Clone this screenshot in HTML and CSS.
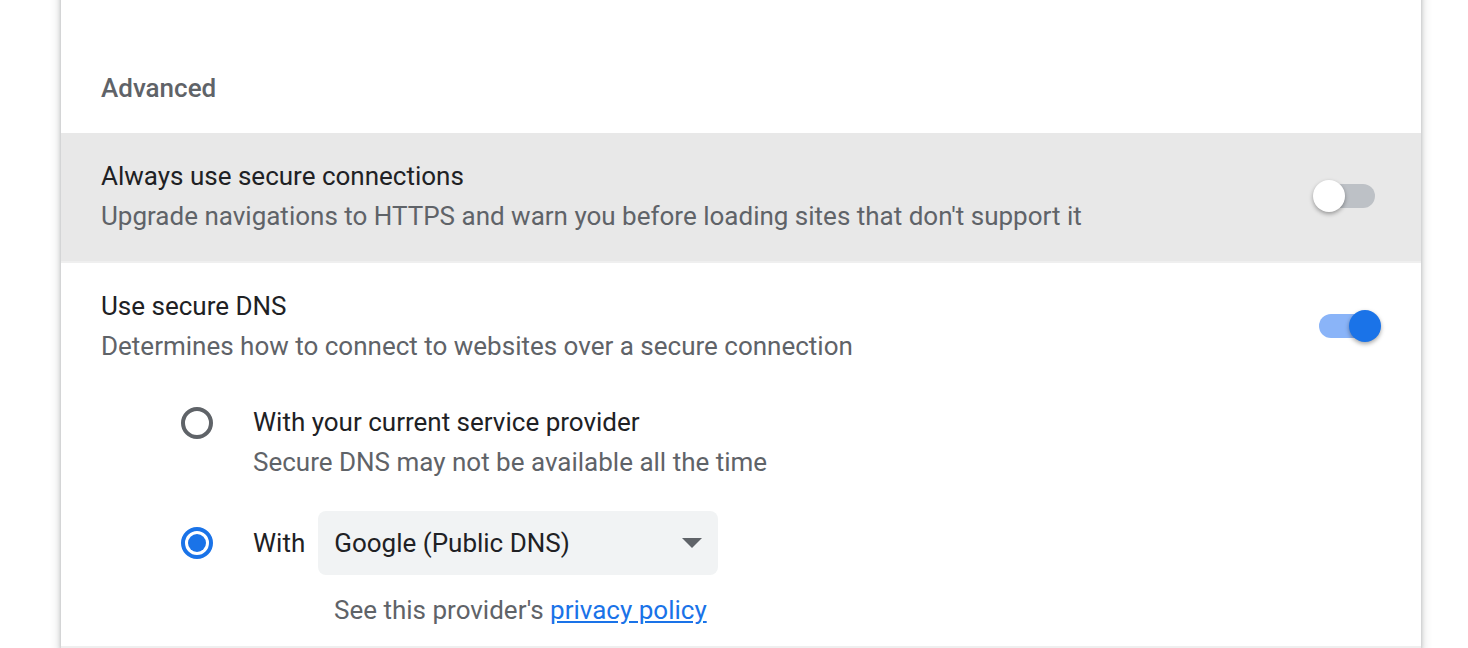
FILE: index.html
```html
<!DOCTYPE html>
<html>
<head>
<meta charset="utf-8">
<link rel="stylesheet" href="styles.css">
</head>
<body>
<div class="card">
  <div class="section-title">Advanced</div>
  <div class="row row-hover">
    <div class="row-text">
      <div class="primary">Always use secure connections</div>
      <div class="secondary">Upgrade navigations to HTTPS and warn you before loading sites that don't support it</div>
    </div>
    <div class="toggle">
      <span class="track"></span>
      <span class="knob"></span>
    </div>
  </div>
  <div class="row row-border">
    <div class="row-text">
      <div class="primary">Use secure DNS</div>
      <div class="secondary">Determines how to connect to websites over a secure connection</div>
    </div>
    <div class="toggle on">
      <span class="track"></span>
      <span class="knob"></span>
    </div>
  </div>
  <div class="radio-group">
    <div class="radio-row">
      <span class="radio"></span>
      <div class="radio-label">
        <div class="primary">With your current service provider</div>
        <div class="secondary">Secure DNS may not be available all the time</div>
      </div>
    </div>
    <div class="radio-row radio-row-select">
      <span class="radio checked"></span>
      <span class="primary with">With</span>
      <div class="select">
        <span>Google (Public DNS)</span>
        <span class="arrow"></span>
      </div>
    </div>
    <div class="policy secondary">See this provider's <a href="#">privacy policy</a></div>
  </div>
  <div class="row-border next"></div>
</div>
</body>
</html>
```

FILE: styles.css
```css
html, body {
  margin: 0;
  padding: 0;
  background: #ffffff;
  overflow: hidden;
}
body {
  font-family: Roboto, "Noto Sans", sans-serif;
  height: 648px;
}
.card {
  margin: -20px 0 0 61px;
  width: 1360px;
  background: #fff;
  box-shadow: 0 2px 4px rgba(60, 64, 67, 0.3), 0 2px 8px 3px rgba(60, 64, 67, 0.15);
  padding-top: 20px;
}
.section-title {
  padding: 72px 40px 29px;
  color: #5f6368;
  font-size: 26px;
  font-weight: 500;
  line-height: 32px;
}
.row {
  display: flex;
  align-items: center;
  padding: 23px 40px 25px;
  min-height: 80px;
}
.row-hover {
  background: #e8e8e8;
}
.row-border {
  border-top: 2px solid #efefef;
}
.row-text {
  flex: 1;
}
.primary {
  color: #202124;
  font-size: 26px;
  line-height: 40px;
}
.secondary {
  color: #5f6368;
  font-size: 26px;
  line-height: 40px;
}
.toggle {
  position: relative;
  width: 68px;
  height: 32px;
}
.track {
  position: absolute;
  left: 6px;
  top: 4px;
  width: 56px;
  height: 24px;
  border-radius: 12px;
  background: #bdc1c6;
}
.knob {
  position: absolute;
  left: 0;
  top: 0;
  width: 32px;
  height: 32px;
  border-radius: 50%;
  background: #fff;
  box-shadow: 0 2px 4px rgba(0, 0, 0, 0.35);
}
.toggle.on .track {
  background: #8ab4f8;
}
.toggle.on .knob {
  left: 36px;
  background: #1a73e8;
}
.radio-group {
  padding: 11px 40px 16px 120px;
}
.radio-row {
  display: flex;
  align-items: flex-start;
}
.radio {
  flex: none;
  width: 32px;
  height: 32px;
  box-sizing: border-box;
  border: 4px solid #5f6368;
  border-radius: 50%;
  margin: 5px 40px 0 0;
  display: flex;
  align-items: center;
  justify-content: center;
}
.radio.checked {
  border-color: #1a73e8;
}
.radio.checked::after {
  content: "";
  width: 18px;
  height: 18px;
  border-radius: 50%;
  background: #1a73e8;
}
.radio-row-select {
  align-items: center;
  margin-top: 29px;
}
.radio-row-select .radio {
  margin-top: 0;
}
.with {
  margin-right: 13px;
}
.select {
  display: flex;
  align-items: center;
  justify-content: space-between;
  width: 400px;
  height: 64px;
  box-sizing: border-box;
  padding: 0 16px;
  background: #f1f3f4;
  border-radius: 8px;
  color: #202124;
  font-size: 26px;
}
.arrow {
  width: 0;
  height: 0;
  border-left: 10px solid transparent;
  border-right: 10px solid transparent;
  border-top: 10px solid #5f6368;
}
.policy {
  margin: 15px 0 0 153px;
}
.policy a {
  color: #1a73e8;
  text-decoration: underline;
}
.next {
  height: 0;
}
```
